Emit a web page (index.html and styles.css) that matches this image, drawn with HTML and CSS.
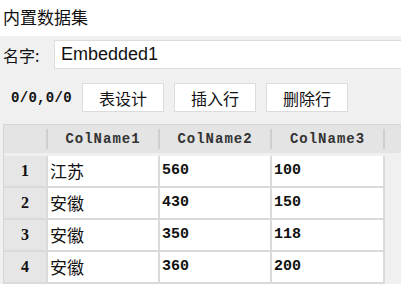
FILE: index.html
```html
<!DOCTYPE html>
<html lang="zh">
<head>
  <meta charset="UTF-8">
  <title>内置数据集</title>
  <link rel="stylesheet" href="styles.css">
</head>
<body>
  <div class="dlg-title">内置数据集</div>
  <div class="dlg-body">
    <div class="name-row">
      <label class="name-label">名字:</label>
      <div class="name-input">Embedded1</div>
    </div>
    <div class="toolbar">
      <span class="pos">0/0,0/0</span>
      <button class="tb-btn">表设计</button>
      <button class="tb-btn">插入行</button>
      <button class="tb-btn">删除行</button>
    </div>
    <div class="grid">
      <div class="grid-head">
        <div class="hcell num"></div>
        <div class="hcell">ColName1</div>
        <div class="hcell">ColName2</div>
        <div class="hcell">ColName3</div>
      </div>
      <div class="grid-row">
        <div class="cell num">1</div>
        <div class="cell cjk">江苏</div>
        <div class="cell">560</div>
        <div class="cell">100</div>
      </div>
      <div class="grid-row">
        <div class="cell num">2</div>
        <div class="cell cjk">安徽</div>
        <div class="cell">430</div>
        <div class="cell">150</div>
      </div>
      <div class="grid-row">
        <div class="cell num">3</div>
        <div class="cell cjk">安徽</div>
        <div class="cell">350</div>
        <div class="cell">118</div>
      </div>
      <div class="grid-row">
        <div class="cell num">4</div>
        <div class="cell cjk">安徽</div>
        <div class="cell">360</div>
        <div class="cell">200</div>
      </div>
    </div>
  </div>
</body>
</html>
```

FILE: styles.css
```css
body {
  margin: 0;
  background: #fff;
  font-family: "Noto Sans CJK SC", sans-serif;
  color: #111;
  overflow: hidden;
}
.dlg-title {
  height: 36px;
  padding-left: 3px;
  font-size: 17px;
  line-height: 34px;
}
.dlg-body {
  background: #f0f0f0;
  height: 248px;
  overflow: hidden;
}
.name-row {
  display: flex;
  align-items: center;
  padding-top: 4px;
  height: 29px;
}
.name-label {
  width: 51px;
  padding-left: 3px;
  font-size: 16px;
}
.name-input {
  flex: 1;
  height: 29px;
  box-sizing: border-box;
  background: #fff;
  border-top: 1px solid #dcdcdc;
  border-bottom: 1px solid #dcdcdc;
  border-left: 1px solid #dcdcdc;
  padding-left: 6px;
  font-family: "Liberation Sans", Arial, sans-serif;
  font-size: 18px;
  line-height: 27px;
}
.toolbar {
  display: flex;
  align-items: center;
  gap: 10px;
  padding: 14px 0 0 11px;
  height: 29px;
}
.pos {
  width: 61px;
  white-space: nowrap;
  font-family: "Liberation Mono", monospace;
  font-size: 14px;
  letter-spacing: 0.3px;
  font-weight: bold;
}
.tb-btn {
  width: 82px;
  height: 29px;
  margin: 0;
  padding: 0;
  background: #fff;
  border: 1px solid #dcdcdc;
  font-family: "Noto Sans CJK SC", sans-serif;
  font-size: 16px;
  color: #111;
}
.grid {
  margin: 12px 0 0 3px;
  border-top: 1px solid #d6d6d6;
  border-left: 1px solid #d6d6d6;
  font-family: "Liberation Mono", monospace;
  font-size: 15px;
}
.grid-head {
  display: grid;
  grid-template-columns: 44px 112px 112px 113px;
  align-items: center;
  height: 28px;
  background: #e4e4e4;
  margin-bottom: 3px;
}
.hcell {
  height: 20px;
  line-height: 20px;
  text-align: center;
  border-right: 2px solid #cfcfcf;
  box-sizing: border-box;
  font-size: 14px;
  letter-spacing: 1px;
  font-weight: bold;
  color: #333;
}
.grid-row {
  display: grid;
  grid-template-columns: 44px 112px 112px 113px;
  width: 381px;
  height: 30px;
  border-bottom: 2px solid #dadada;
}
.cell {
  background: #fff;
  border-right: 2px solid #dadada;
  padding-left: 2px;
  line-height: 30px;
  font-weight: bold;
}
.cell.num {
  background: #e6e6e6;
  text-align: center;
  padding-left: 0;
  font-family: "Liberation Serif", serif;
  font-size: 16px;
}
.cell.cjk {
  font-family: "Noto Sans CJK SC", sans-serif;
  font-size: 17px;
  font-weight: normal;
}
```
